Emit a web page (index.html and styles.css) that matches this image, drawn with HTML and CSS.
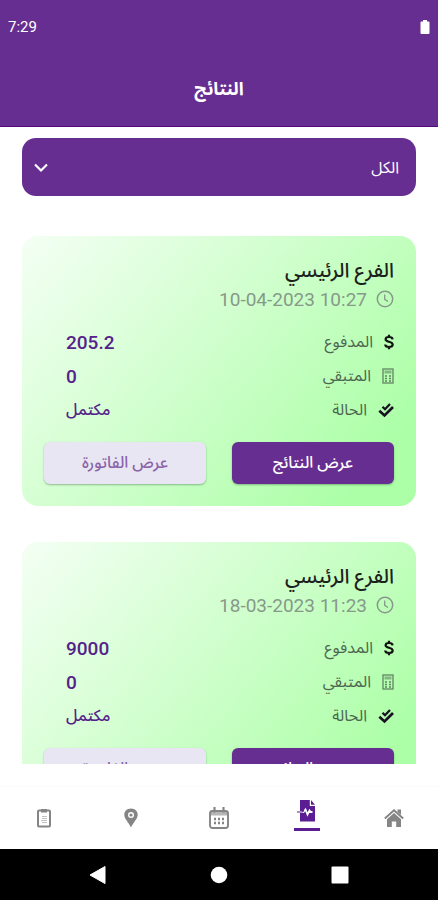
FILE: index.html
```html
<!DOCTYPE html>
<html lang="ar" dir="rtl">
<head>
<meta charset="utf-8">
<meta name="viewport" content="width=device-width, initial-scale=1">
<title>النتائج</title>
<link rel="stylesheet" href="styles.css">
</head>
<body>
<svg class="sprite" aria-hidden="true">
  <symbol id="clock" viewBox="0 0 18 18"><circle cx="9" cy="9" r="7.700" fill="none" stroke="currentColor" stroke-width="1.500"/><path d="M8.700 4.500V9.300L12 11.500" fill="none" stroke="currentColor" stroke-width="1.300"/></symbol>
  <symbol id="dollar" viewBox="0 0 10 16"><path d="M8.600 5.300C8.400 3.700 7 3 5 3S1.600 3.800 1.600 5.300C1.600 8.600 8.700 6.900 8.700 10.600C8.700 12.200 7.200 13 5 13S1.300 12.200 1.200 10.500M5 .8V3M5 13V15.200" fill="none" stroke="currentColor" stroke-width="2.200"/></symbol>
  <symbol id="calc" viewBox="0 0 12 16"><rect x="1" y="1" width="10" height="14" fill="none" stroke="currentColor" stroke-width="1.300"/><path d="M2.500 2.500H9.500V5.500H2.500Z" fill="currentColor" opacity=".6"/><path d="M3 8H5M7 8H9M3 10.500H5M7 10.500H9M3 13H5M7 13H9" stroke="currentColor" stroke-width="1.400"/></symbol>
  <symbol id="checks" viewBox="0 0 16 16"><path d="M4.500 4.700L7 7.200L12 2" fill="none" stroke="currentColor" stroke-width="2.300"/><path d="M1.300 8.700L6.500 13.400L15 5" fill="none" stroke="currentColor" stroke-width="2.700"/></symbol>
</svg>

<header class="top">
  <div class="status">
    <span>7:29</span>
    <svg width="10" height="16" viewBox="0 0 10 16" aria-hidden="true"><path d="M3 1H7V2.500H8.500Q9.500 2.500 9.500 3.500V14Q9.500 15 8.500 15H1.500Q.5 15 .5 14V3.500Q.5 2.500 1.500 2.500H3Z" fill="#fff"/></svg>
  </div>
  <h1>النتائج</h1>
</header>

<main class="results">
  <div class="filter">
    <select aria-label="الفرع"><option>الكل</option></select>
    <svg class="chevron" width="14" height="10" viewBox="0 0 14 10" aria-hidden="true"><path d="M1 1.500L7 7.500L13 1.500" fill="none" stroke="#fff" stroke-width="2.200"/></svg>
  </div>

  <article class="card">
    <h2>الفرع الرئيسي</h2>
    <p class="date"><svg class="clock" aria-hidden="true"><use href="#clock"/></svg><time dir="ltr">10-04-2023 10:27</time></p>
    <dl class="facts">
      <div><dt><svg class="dollar" aria-hidden="true"><use href="#dollar"/></svg>المدفوع</dt><dd>205.2</dd></div>
      <div><dt><svg class="calc" aria-hidden="true"><use href="#calc"/></svg>المتبقي</dt><dd>0</dd></div>
      <div><dt><svg class="checks" aria-hidden="true"><use href="#checks"/></svg>الحالة</dt><dd class="state">مكتمل</dd></div>
    </dl>
    <div class="actions">
      <button class="primary" type="button">عرض النتائج</button>
      <button class="secondary" type="button">عرض الفاتورة</button>
    </div>
  </article>

  <article class="card">
    <h2>الفرع الرئيسي</h2>
    <p class="date"><svg class="clock" aria-hidden="true"><use href="#clock"/></svg><time dir="ltr">18-03-2023 11:23</time></p>
    <dl class="facts">
      <div><dt><svg class="dollar" aria-hidden="true"><use href="#dollar"/></svg>المدفوع</dt><dd>9000</dd></div>
      <div><dt><svg class="calc" aria-hidden="true"><use href="#calc"/></svg>المتبقي</dt><dd>0</dd></div>
      <div><dt><svg class="checks" aria-hidden="true"><use href="#checks"/></svg>الحالة</dt><dd class="state">مكتمل</dd></div>
    </dl>
    <div class="actions">
      <button class="primary" type="button">عرض النتائج</button>
      <button class="secondary" type="button">عرض الفاتورة</button>
    </div>
  </article>
</main>

<nav class="tabs">
  <a href="#home" aria-label="الرئيسية"><svg width="20" height="20" viewBox="0 0 20 20"><path d="M.8 10.500L10 2.300L19.200 10.500" fill="none" stroke="currentColor" stroke-width="2"/><path d="M13.500 1.500H17V7L13.500 4Z" fill="currentColor"/><path d="M10 5L17 11.200V19H12.200V13.500H7.800V19H3V11.200Z" fill="currentColor"/></svg></a>
  <a href="#results" class="active" aria-label="النتائج" aria-current="page"><svg width="20" height="22" viewBox="0 0 20 22"><path d="M3 0H12.800V6H18V21.500H3Z" fill="currentColor"/><path d="M14 0L18 4.700H14Z" fill="currentColor"/><path d="M3 12H6.500L8.500 9.500L10.500 14.500L12.500 10.500L13.500 12H15.500" fill="none" stroke="#fff" stroke-width="1.800"/><path d="M0 12H5L7 10.500" fill="none" stroke="currentColor" stroke-width="1.200"/></svg></a>
  <a href="#appointments" aria-label="المواعيد"><svg width="20" height="22" viewBox="0 0 20 22"><rect x="1" y="4" width="18" height="17" rx="2.500" fill="none" stroke="currentColor" stroke-width="1.900"/><path d="M1 4H19V8.500H1Z" fill="currentColor" opacity=".6"/><path d="M5.500 0V5.500M14.500 0V5.500" stroke="currentColor" stroke-width="2.200"/><path d="M5 12H7M9 12H11M13 12H15M5 16H7M9 16H11M13 16H15" stroke="currentColor" stroke-width="2.500"/></svg></a>
  <a href="#branches" aria-label="الفروع"><svg width="14" height="20" viewBox="0 0 14 20"><path fill-rule="evenodd" d="M7 .5C3 .5 .3 3.300 .3 6.800C.3 11 4.500 14 7 19.500C9.500 14 13.700 11 13.700 6.800C13.700 3.300 11 .5 7 .5ZM7 4A3 3 0 1 1 7 10A3 3 0 1 1 7 4Z" fill="currentColor"/><circle cx="7" cy="7" r="1.600" fill="currentColor"/></svg></a>
  <a href="#orders" aria-label="الطلبات"><svg width="14" height="20" viewBox="0 0 14 20"><rect x="1" y="2.500" width="12" height="16" rx="1" fill="none" stroke="currentColor" stroke-width="2"/><path d="M4 1H10V4.500H4Z" fill="currentColor"/><path d="M5 8.500H10M5 10.500H10M4 12.500H10M5 14.500H10" stroke="currentColor" opacity=".5"/></svg></a>
</nav>

<footer class="system" dir="ltr">
  <button type="button" aria-label="رجوع"><svg width="18" height="20" viewBox="0 0 18 20"><path d="M1 10L16 1.500V18.500Z" fill="#fff" stroke="#fff" stroke-linejoin="round"/></svg></button>
  <button type="button" aria-label="الشاشة الرئيسية"><svg width="18" height="18" viewBox="0 0 18 18"><circle cx="9" cy="9" r="8.300" fill="#fff"/></svg></button>
  <button type="button" aria-label="التطبيقات الأخيرة"><svg width="18" height="18" viewBox="0 0 18 18"><rect x=".5" y=".5" width="17" height="17" rx="1" fill="#fff"/></svg></button>
</footer>
</body>
</html>
```
FILE: styles.css
```css
* {
  box-sizing: border-box;
  margin: 0;
  padding: 0;
}

body {
  display: flex;
  flex-direction: column;
  height: 100vh;
  overflow: hidden;
  background: #fff;
  font-family: Roboto, "Noto Sans Arabic", "Noto Sans", "DejaVu Sans", sans-serif;
}

svg {
  display: block;
  flex: none;
}

button,
select {
  border: 0;
  font-family: inherit;
}

.sprite {
  position: absolute;
  width: 0;
  height: 0;
}

.top {
  flex: none;
  background: #672e92;
  border-bottom: 1px solid #530b80;
  color: #fff;
}

.status {
  display: flex;
  direction: ltr;
  align-items: center;
  justify-content: space-between;
  height: 54px;
  padding: 0 8px;
  font-size: 15px;
}

.top h1 {
  padding-bottom: 2px;
  font-size: 18px;
  line-height: 70px;
  text-align: center;
}

.results {
  flex: 1;
  min-height: 0;
  margin-bottom: 22px;
  padding: 11px 22px 0;
  overflow: hidden;
}

.filter {
  position: relative;
  margin-bottom: 40px;
}

.filter select {
  display: block;
  width: 100%;
  height: 58px;
  padding: 0 17px;
  appearance: none;
  border-radius: 14px;
  background: #672e92;
  color: #fff;
  font-size: 16px;
}

.chevron {
  position: absolute;
  top: 25px;
  left: 12px;
  pointer-events: none;
}

.card {
  margin-bottom: 36px;
  padding: 20px 22px 22px;
  border-radius: 16px;
  background: linear-gradient(130deg, #f4fff4 0%, #d0ffcd 45%, #acffa7 88%);
}

.card h2 {
  color: #1c211c;
  font-size: 20px;
  font-weight: 500;
  line-height: 28px;
}

.date {
  display: flex;
  align-items: center;
  gap: 9px;
  height: 30px;
  margin-bottom: 11px;
  color: #87998a;
  font-size: 19px;
}

.clock {
  width: 18px;
  height: 18px;
}

.facts div {
  display: flex;
  align-items: center;
  justify-content: space-between;
  height: 34px;
  padding-left: 22px;
}

.facts dt {
  display: flex;
  align-items: center;
  gap: 11px;
  color: #4d6650;
  font-size: 16px;
}

.facts dd {
  color: #55228a;
  font-size: 19px;
  font-weight: 500;
}

.facts .state {
  font-size: 16px;
}

.dollar {
  width: 10px;
  height: 16px;
  color: #111;
}

.calc {
  width: 12px;
  height: 16px;
  color: #628562;
}

.checks {
  width: 16px;
  height: 16px;
  color: #1c1024;
}

.actions {
  display: grid;
  grid-template-columns: 1fr 1fr;
  gap: 26px;
  margin-top: 15px;
}

.actions button {
  height: 42px;
  border-radius: 6px;
  box-shadow: 0 1px 2px rgba(40, 80, 50, 0.4);
  font-size: 16px;
}

.primary {
  background: #672e92;
  color: #fff;
  font-weight: 500;
}

.secondary {
  background: #e8e6f2;
  color: #8a62a8;
  font-weight: 500;
}

.tabs {
  display: grid;
  grid-template-columns: repeat(5, 1fr);
  flex: none;
  height: 63px;
  border-top: 1px solid #fafafa;
  color: #858585;
}

.tabs a {
  display: flex;
  flex-direction: column;
  align-items: center;
  justify-content: center;
  color: inherit;
}

.tabs .active {
  justify-content: flex-start;
  gap: 6px;
  padding-top: 13px;
  color: #5c1c92;
}

.active::after {
  width: 26px;
  height: 3px;
  background: currentColor;
  content: "";
}

.system {
  display: flex;
  flex: none;
  align-items: center;
  justify-content: center;
  gap: 103px;
  height: 51px;
  background: #000;
}

.system button {
  display: block;
  background: none;
}
```
